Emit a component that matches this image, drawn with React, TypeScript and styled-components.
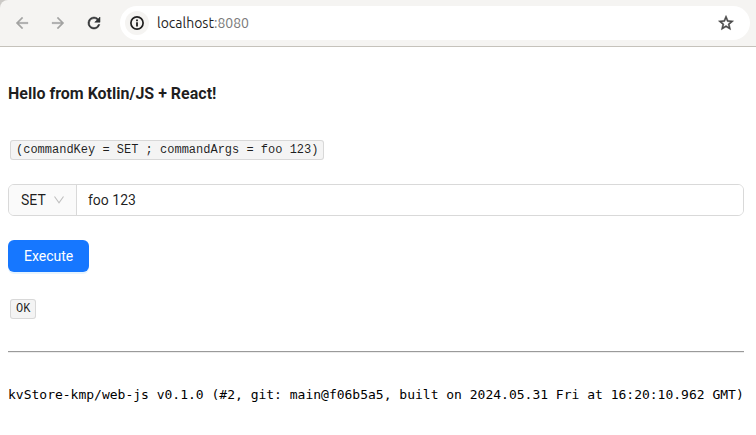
import React, { useState } from "react";
import styled, { createGlobalStyle } from "styled-components";

const GlobalStyle = createGlobalStyle`
  *, *::before, *::after { box-sizing: border-box; }
  body {
    margin: 0;
    background: #ffffff;
    color: rgba(0, 0, 0, 0.88);
    font-family: Roboto, "Liberation Sans", sans-serif;
    font-size: 14px;
    line-height: 22px;
  }
`;

const ToolbarFrame = styled.div`
  background: #cbc9c6;
`;

const Toolbar = styled.header`
  display: flex;
  align-items: center;
  padding: 6px 6px 6px 4px;
  background: #f5f4f2;
  border-bottom: 1px solid #c5c2bb;
  border-top-left-radius: 8px;
`;

const NavButtons = styled.nav`
  display: flex;
  margin-right: 8px;
`;

const IconButton = styled.button<{ $color: string; $size?: number; $fill?: string }>`
  display: flex;
  align-items: center;
  justify-content: center;
  width: ${(p) => p.$size ?? 36}px;
  height: ${(p) => p.$size ?? 34}px;
  padding: 0;
  border: 0;
  border-radius: 50%;
  background: ${(p) => p.$fill ?? "transparent"};
  color: ${(p) => p.$color};

  svg { display: block; fill: currentColor; }
`;

const AddressBar = styled.div`
  display: flex;
  flex: 1;
  align-items: center;
  gap: 8px;
  height: 34px;
  padding: 0 12px 0 5px;
  border-radius: 17px;
  background: #ffffff;
`;

const Address = styled.div`
  flex: 1;
  color: #1f1f1f;
  font-family: Ubuntu, "Noto Sans", sans-serif;
  font-size: 14px;
  line-height: 20px;
`;

const Port = styled.span`
  color: #7a7a7a;
`;

const Page = styled.main`
  display: flex;
  flex-direction: column;
  align-items: flex-start;
  gap: 24px;
  padding: 35px 12px 0 8px;
`;

const Title = styled.h1`
  margin: 0 0 10px;
  font-size: 16px;
  font-weight: 700;
  line-height: 24px;
`;

const Code = styled.code`
  display: block;
  margin: 0 2px;
  padding: 0 5px;
  border: 1px solid rgba(100, 100, 100, 0.2);
  border-radius: 3px;
  background: rgba(150, 150, 150, 0.1);
  font-family: "Liberation Mono", monospace;
  font-size: 12px;
  line-height: 18px;
`;

const CommandRow = styled.div`
  display: flex;
  align-self: stretch;
  height: 32px;
  border: 1px solid #d9d9d9;
  border-radius: 6px;
  overflow: hidden;
`;

const SelectBox = styled.div`
  display: grid;
  align-items: center;
  width: 68px;
  border-right: 1px solid #d9d9d9;
  background: #fafafa;

  > * { grid-area: 1 / 1; }
  > svg { justify-self: end; margin-right: 11px; pointer-events: none; }
`;

const CommandSelect = styled.select`
  width: 100%;
  height: 30px;
  padding: 0 12px;
  border: 0;
  outline: 0;
  appearance: none;
  background: transparent;
  color: inherit;
  font: inherit;
`;

const ArgsInput = styled.input`
  flex: 1;
  min-width: 0;
  padding: 0 11px;
  border: 0;
  outline: 0;
  background: #ffffff;
  color: inherit;
  font: inherit;
`;

const ExecuteButton = styled.button`
  height: 32px;
  padding: 0 16px;
  border: 0;
  border-radius: 6px;
  background: #1677ff;
  box-shadow: 0 2px 0 rgba(5, 145, 255, 0.1);
  color: #ffffff;
  font: inherit;
`;

const Result = styled.div`
  padding: 3px 0 8px;
`;

const Divider = styled.hr`
  align-self: stretch;
  margin: 0;
  border: solid;
  border-width: 1px 0;
  border-color: #9a9a9a #ededed #ededed #9a9a9a;
`;

const BuildInfo = styled.pre`
  margin: 10px 0 0;
  color: #000000;
  font-family: "DejaVu Sans Mono", monospace;
  font-size: 13px;
  line-height: 16px;
`;

const BackIcon = () => (
  <svg width="18" height="18" viewBox="0 0 24 24" aria-hidden="true">
    <path d="M20 11H7.83l5.59-5.59L12 4l-8 8 8 8 1.41-1.41L7.83 13H20v-2z" stroke="currentColor" strokeWidth="0.4" />
  </svg>
);

const ForwardIcon = () => (
  <svg width="18" height="18" viewBox="0 0 24 24" aria-hidden="true">
    <path d="M12 4l-1.41 1.41L16.17 11H4v2h12.17l-5.58 5.59L12 20l8-8z" stroke="currentColor" strokeWidth="0.4" />
  </svg>
);

const ReloadIcon = () => (
  <svg width="18" height="18" viewBox="0 0 24 24" aria-hidden="true">
    <path
      d="M17.65 6.35A7.96 7.96 0 0 0 12 4a8 8 0 1 0 7.73 10h-2.08A6 6 0 1 1 12 6c1.66 0 3.14.69 4.22 1.78L13 11h7V4l-2.35 2.35z"
      stroke="currentColor"
      strokeWidth="0.7"
    />
  </svg>
);

const InfoIcon = () => (
  <svg width="14" height="14" viewBox="0 0 14 14" aria-hidden="true">
    <circle cx="7" cy="7" r="6.1" fill="none" stroke="currentColor" strokeWidth="1.7" />
    <path d="M6.1 6.2h1.8v4.2H6.1zM6.1 3.5h1.8v1.7H6.1z" />
  </svg>
);

const StarIcon = () => (
  <svg width="18" height="18" viewBox="0 0 24 24" aria-hidden="true">
    <path
      d="M22 9.24l-7.19-.62L12 2 9.19 8.63 2 9.24l5.46 4.73L5.82 21 12 17.27 18.18 21l-1.63-7.03L22 9.24zM12 15.4l-3.76 2.27 1-4.28-3.32-2.88 4.38-.38L12 6.1l1.71 4.04 4.38.38-3.32 2.88 1 4.28L12 15.4z"
      stroke="currentColor"
      strokeWidth="0.7"
    />
  </svg>
);

const ChevronIcon = () => (
  <svg width="12" height="12" viewBox="0 0 12 12" aria-hidden="true">
    <path d="M1.5 2.5L6 8.9l4.5-6.4" fill="none" stroke="#bfbfbf" strokeWidth="1.1" />
  </svg>
);

export default function App() {
  const [command, setCommand] = useState("SET");
  const [args, setArgs] = useState("foo 123");

  return (
    <>
      <GlobalStyle />
      <ToolbarFrame>
        <Toolbar>
          <NavButtons aria-label="Browser navigation">
            <IconButton $color="#a3a3a2" aria-label="Back"><BackIcon /></IconButton>
            <IconButton $color="#a3a3a2" aria-label="Forward"><ForwardIcon /></IconButton>
            <IconButton $color="#303234" aria-label="Reload"><ReloadIcon /></IconButton>
          </NavButtons>
          <AddressBar>
            <IconButton $color="#1f1f1f" $size={24} $fill="#f5f4f2" aria-label="Site information">
              <InfoIcon />
            </IconButton>
            <Address>localhost<Port>:8080</Port></Address>
            <IconButton $color="#474747" $size={24} aria-label="Bookmark this page">
              <StarIcon />
            </IconButton>
          </AddressBar>
        </Toolbar>
      </ToolbarFrame>
      <Page>
        <Title>Hello from Kotlin/JS + React!</Title>
        <Code>{`(commandKey = ${command} ; commandArgs = ${args})`}</Code>
        <CommandRow>
          <SelectBox>
            <CommandSelect
              aria-label="Command"
              value={command}
              onChange={(e) => setCommand(e.target.value)}
            >
              <option>SET</option>
              <option>GET</option>
            </CommandSelect>
            <ChevronIcon />
          </SelectBox>
          <ArgsInput
            type="text"
            aria-label="Command arguments"
            value={args}
            onChange={(e) => setArgs(e.target.value)}
          />
        </CommandRow>
        <ExecuteButton type="button">Execute</ExecuteButton>
        <Result>
          <Code>OK</Code>
        </Result>
        <Divider />
        <BuildInfo>
          kvStore-kmp/web-js v0.1.0 (#2, git: main@f06b5a5, built on 2024.05.31 Fri at 16:20:10.962 GMT)
        </BuildInfo>
      </Page>
    </>
  );
}
